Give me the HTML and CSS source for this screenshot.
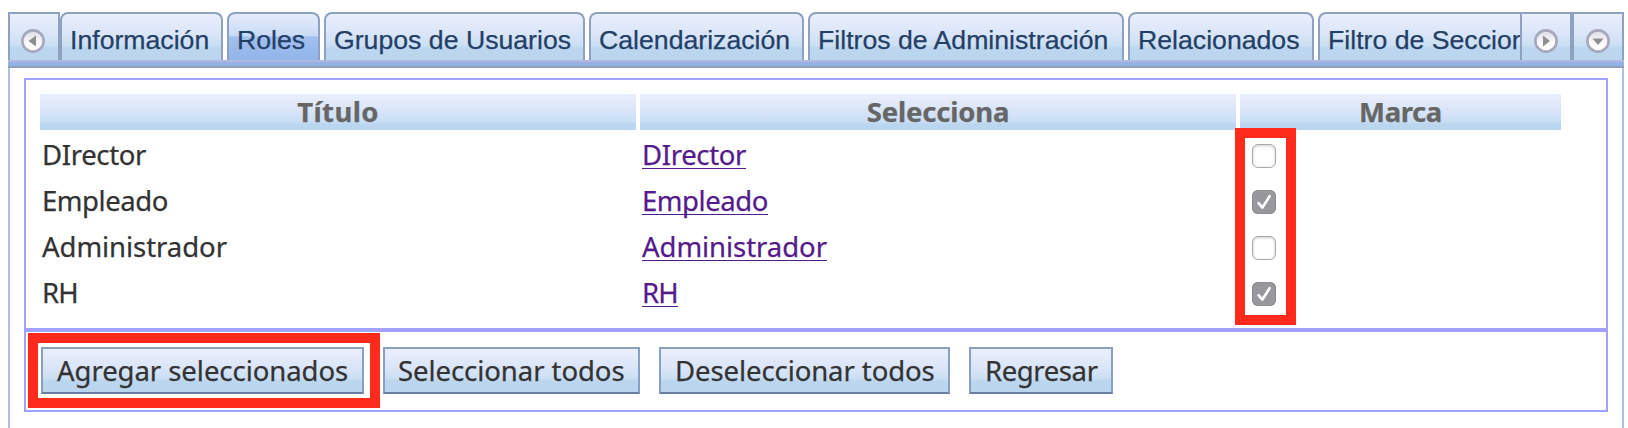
FILE: index.html
```html
<!DOCTYPE html>
<html lang="es">
<head>
<meta charset="utf-8">
<title>Roles</title>
<link rel="stylesheet" href="styles.css">
</head>
<body>
<svg class="defs" width="0" height="0" aria-hidden="true">
  <defs>
    <linearGradient id="knob" x1="0" y1="0" x2="0" y2="1">
      <stop offset="0" stop-color="#dcdce6"/>
      <stop offset="0.55" stop-color="#f8f8fb"/>
      <stop offset="1" stop-color="#ffffff"/>
    </linearGradient>
  </defs>
</svg>
<div class="container">
  <div class="tabstrip">
    <button class="scroller scroller-left" aria-label="Anterior">
      <svg width="24" height="24" viewBox="0 0 24 24"><circle cx="12" cy="12" r="10.600" fill="url(#knob)" stroke="#a6a8bc" stroke-width="2.6"/><path d="M15 6.500V17.500L7.500 12Z" fill="#8f8f8f"/></svg>
    </button>
    <div class="tabs">
      <div class="tab t1">Información</div>
      <div class="tab t2 selected">Roles</div>
      <div class="tab t3">Grupos de Usuarios</div>
      <div class="tab t4">Calendarización</div>
      <div class="tab t5">Filtros de Administración</div>
      <div class="tab t6">Relacionados</div>
      <div class="tab t7">Filtro de Secciones</div>
    </div>
    <button class="scroller scroller-right" aria-label="Siguiente">
      <svg width="24" height="24" viewBox="0 0 24 24"><circle cx="12" cy="12" r="10.600" fill="url(#knob)" stroke="#a6a8bc" stroke-width="2.6"/><path d="M9 6.500V17.500L16 12Z" fill="#8f8f8f"/></svg>
    </button>
    <button class="scroller scroller-menu" aria-label="Lista">
      <svg width="24" height="24" viewBox="0 0 24 24"><circle cx="12" cy="12" r="10.600" fill="url(#knob)" stroke="#a6a8bc" stroke-width="2.6"/><path d="M6.500 9.500H17.500L12 16Z" fill="#8f8f8f"/></svg>
    </button>
  </div>
  <div class="tabline"></div>
  <div class="content">
    <div class="fieldset roles">
      <div class="grid head">
        <div class="th h1"><span>Título</span></div>
        <div class="th h2"><span>Selecciona</span></div>
        <div class="th h3"><span>Marca</span></div>
      </div>
      <div class="grid row w-director"><span>DIrector</span><span><a>DIrector</a></span><span class="mark"><i class="check"></i></span></div>
      <div class="grid row w-empleado"><span>Empleado</span><span><a>Empleado</a></span><span class="mark"><i class="check on"><svg width="24" height="24" viewBox="0 0 24 24"><path d="M6.500 13.200L10.400 17.600L17.600 6.200"/></svg></i></span></div>
      <div class="grid row w-admin"><span>Administrador</span><span><a>Administrador</a></span><span class="mark"><i class="check"></i></span></div>
      <div class="grid row w-rh"><span>RH</span><span><a>RH</a></span><span class="mark"><i class="check on"><svg width="24" height="24" viewBox="0 0 24 24"><path d="M6.500 13.200L10.400 17.600L17.600 6.200"/></svg></i></span></div>
      <div class="highlight around-checks"></div>
    </div>
    <div class="fieldset actions">
      <button class="btn b1">Agregar seleccionados</button>
      <button class="btn b2">Seleccionar todos</button>
      <button class="btn b3">Deseleccionar todos</button>
      <button class="btn b4">Regresar</button>
      <div class="highlight around-button"></div>
    </div>
  </div>
</div>
</body>
</html>
```
FILE: styles.css
```css
* { box-sizing: border-box; }
html, body { height: 100%; }
body {
  margin: 0;
  overflow: hidden;
  background: #fff;
  color: #333;
  font: 27.5px/42px "Noto Sans", sans-serif;
  -webkit-text-stroke: 0.25px;
}
button { font: inherit; color: inherit; margin: 0; }
svg { display: block; }
.defs { position: absolute; }

.container {
  display: flex;
  flex-direction: column;
  height: 428px;
  padding: 12px 4px 0 8px;
}

/* Tab strip */
.tabstrip { display: flex; height: 48px; flex: none; }
.scroller {
  display: flex;
  justify-content: center;
  align-items: center;
  width: 52px;
  height: 48px;
  padding: 8px 3px 0 0;
  border: 2px solid #8ea1c1;
  border-bottom: 0;
  background: linear-gradient(#eaeffc 0%, #d9e5f8 45%, #cbdff4 68%, #bcd6ef 74%, #bad5ee 100%);
}
.scroller-left { border-right-width: 2px; }
.scroller-right { border-right-width: 4px; width: 54px; padding-right: 1px; }
.scroller-menu { border-left: 0; width: 50px; padding-right: 1px; }
.tabs {
  display: flex;
  gap: 4px;
  width: 1460px;
  overflow: hidden;
}
.tab {
  flex: none;
  height: 48px;
  padding-left: 8px;
  border: 2px solid #8ea1c1;
  border-bottom: 0;
  border-radius: 8px 8px 0 0;
  background: linear-gradient(#eaeffc 0%, #d9e5f8 45%, #cbdff4 68%, #bcd6ef 74%, #bad5ee 100%);
  color: #243f66;
  font: 26.66px/53px "Liberation Sans", Arial, sans-serif;
  white-space: nowrap;
}
.tab.selected {
  background: linear-gradient(#e5ecfb 0%, #c9dbf6 47%, #a2c0ee 50%, #92b4e9 100%);
}
.t1 { width: 163px; }
.t2 { width: 93px; }
.t3 { width: 261px; }
.t4 { width: 215px; }
.t5 { width: 316px; }
.t6 { width: 186px; }
.t7 { width: 260px; }
.tabline {
  flex: none;
  height: 8px;
  border-top: 2px solid #b0b7e0;
  border-bottom: 2px solid #8ea1c1;
  background: #94b1e2;
}

/* Content */
.content {
  flex: 1;
  padding: 10px 14px 0;
  border: solid #b1bde2;
  border-width: 0 2px;
}
.fieldset { position: relative; border: 2px solid #a1a1ff; }
.roles { height: 252px; padding: 14px; }
.grid {
  display: grid;
  grid-template-columns: 596px 596px 321px;
  column-gap: 4px;
}
.head { height: 36px; margin-bottom: 4px; }
.th {
  background: linear-gradient(#eaeffc 0%, #d5e3f7 55%, #c8ddf4 78%, #bbd6ef 84%, #bad5ee 100%);
  color: #666;
  font-weight: 700;
  line-height: 36px;
  text-align: center;
}
.h1 { letter-spacing: 0.4px; }
.h2 { letter-spacing: -0.2px; }
.h3 { letter-spacing: -0.4px; }
.row { height: 42px; margin-bottom: 4px; }
.row > span { padding-left: 2px; line-height: 42px; }
.row a {
  color: #551a8b;
  text-decoration: underline;
  text-decoration-thickness: 1px;
  text-underline-offset: 3px;
  text-decoration-skip-ink: none;
}
.w-director { letter-spacing: -0.35px; }
.w-empleado { letter-spacing: -0.44px; }
.w-admin { letter-spacing: -0.05px; }
.w-rh { letter-spacing: -0.75px; }
.row > .mark { display: flex; align-items: center; padding: 2px 0 0 12px; }
.check {
  width: 24px;
  height: 24px;
  border: 1px solid #a9a9a9;
  border-radius: 6px;
  background: #fff;
  box-shadow: inset 0 1px 3px rgba(0, 0, 0, 0.2);
}
.check.on { border: 0; background: #98979c; box-shadow: inset 0 0 0 1px #8f8e93; }
.check path {
  fill: none;
  stroke: #fff;
  stroke-width: 2.6;
  stroke-linecap: round;
  stroke-linejoin: round;
}

/* Buttons */
.actions { display: flex; height: 82px; padding: 15px 0 0 15px; }
.btn {
  height: 47px;
  padding: 0 0 0 14px;
  border: 2px solid #8aa0c0;
  border-bottom-color: #687da0;
  background: linear-gradient(#eaeffc 0%, #d9e5f8 45%, #cbdff4 68%, #bcd6ef 74%, #bad5ee 100%);
  line-height: 43px;
  text-align: left;
  white-space: nowrap;
}
.b1 { width: 323px; margin-right: 19px; letter-spacing: -0.05px; }
.b2 { width: 257px; margin-right: 19px; padding-left: 13px; letter-spacing: -0.06px; }
.b3 { width: 291px; margin-right: 19px; letter-spacing: -0.08px; }
.b4 { width: 144px; letter-spacing: -0.4px; }

/* Annotation frames */
.highlight { position: absolute; border: 10px solid #fe2b1d; }
.around-checks { left: 1209px; top: 48px; width: 61px; height: 197px; }
.around-button { left: 2px; top: 1px; width: 352px; height: 75px; }
```
